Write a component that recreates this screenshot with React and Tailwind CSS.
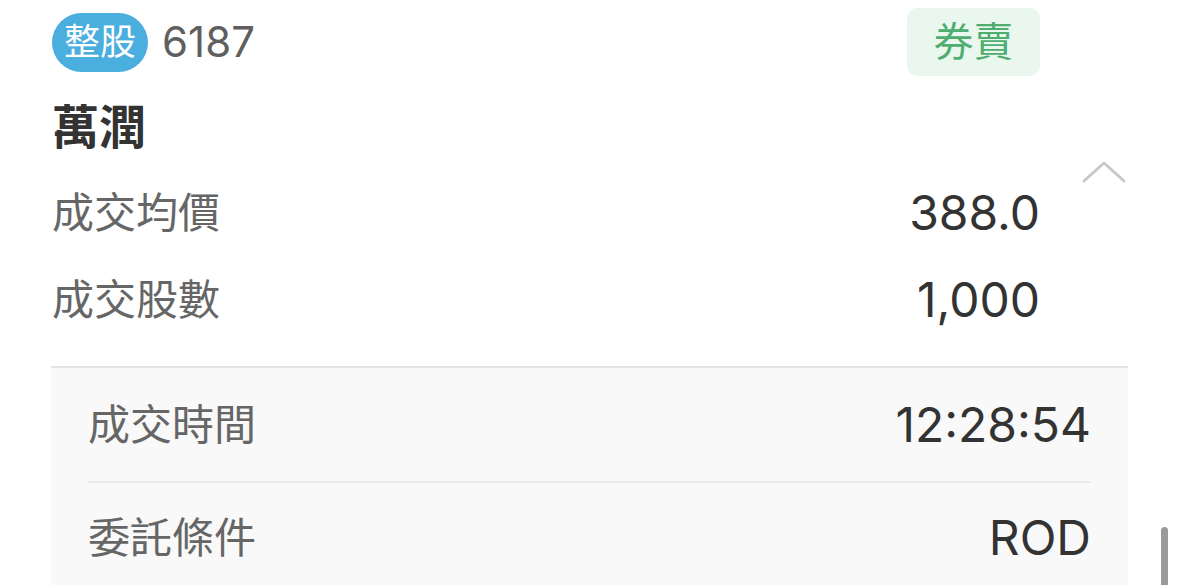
const font = "font-['Inter','Noto_Sans_CJK_TC',sans-serif]";

function Value({ children }) {
  return <span className="text-[48px] leading-none text-[#333333]">{children}</span>;
}

function InfoRow({ label, value }) {
  return (
    <div className="h-[87px] flex items-center justify-between">
      <span className="text-[42px] leading-none text-[#666666]">{label}</span>
      <Value>{value}</Value>
    </div>
  );
}

export default function App() {
  return (
    <div className={`w-[1179px] h-[585px] bg-white relative overflow-hidden ${font}`}>
      <div className="flex pl-[52px] pr-[51px]">
        {/* main column */}
        <div className="flex-1">
          <div className="pt-[8px] h-[76px] flex items-center justify-between">
            <div className="flex items-center gap-[14px]">
              <span className="h-[59px] px-[12px] rounded-full bg-[#4aaede] text-white text-[36px] leading-none flex items-center">
                整股
              </span>
              <span className="text-[42px] leading-none text-[#5f5f5f]">6187</span>
            </div>
            <span className="h-[68px] w-[133px] rounded-[10px] bg-[#eaf7ef] text-[#4fad6f] text-[40px] leading-none flex items-center justify-center">
              券賣
            </span>
          </div>
          <div className="h-[93px] pt-[25px]">
            <h1 className="text-[47px] leading-[52px] font-bold text-[#333333]">萬潤</h1>
          </div>
          <InfoRow label="成交均價" value="388.0" />
          <InfoRow label="成交股數" value="1,000" />
        </div>
        {/* toggle column */}
        <div className="w-[88px] flex justify-end">
          <svg width="44" height="22" viewBox="0 0 44 22" className="mt-[161px] mr-[2px]" fill="none">
            <polyline points="2,20 22,2 42,20" stroke="#c8c8c8" strokeWidth="3" strokeLinecap="round" strokeLinejoin="round" />
          </svg>
        </div>
      </div>

      <div className="mt-[23px] ml-[51px] mr-[51px] border-t-2 border-[#e4e4e4] bg-[#f9f9f9] px-[37px] h-[300px]">
        <div className="h-[113px] flex items-center justify-between">
          <span className="text-[42px] leading-none text-[#666666]">成交時間</span>
          <Value>12:28:54</Value>
        </div>
        <div className="h-[2px] bg-[#ececec]" />
        <div className="h-[110px] flex items-center justify-between">
          <span className="text-[42px] leading-none text-[#666666]">委託條件</span>
          <Value>ROD</Value>
        </div>
      </div>

      <div className="absolute left-[1161px] top-[527px] w-[7px] h-[70px] rounded-full bg-[#9a9a9a]" />
    </div>
  );
}
